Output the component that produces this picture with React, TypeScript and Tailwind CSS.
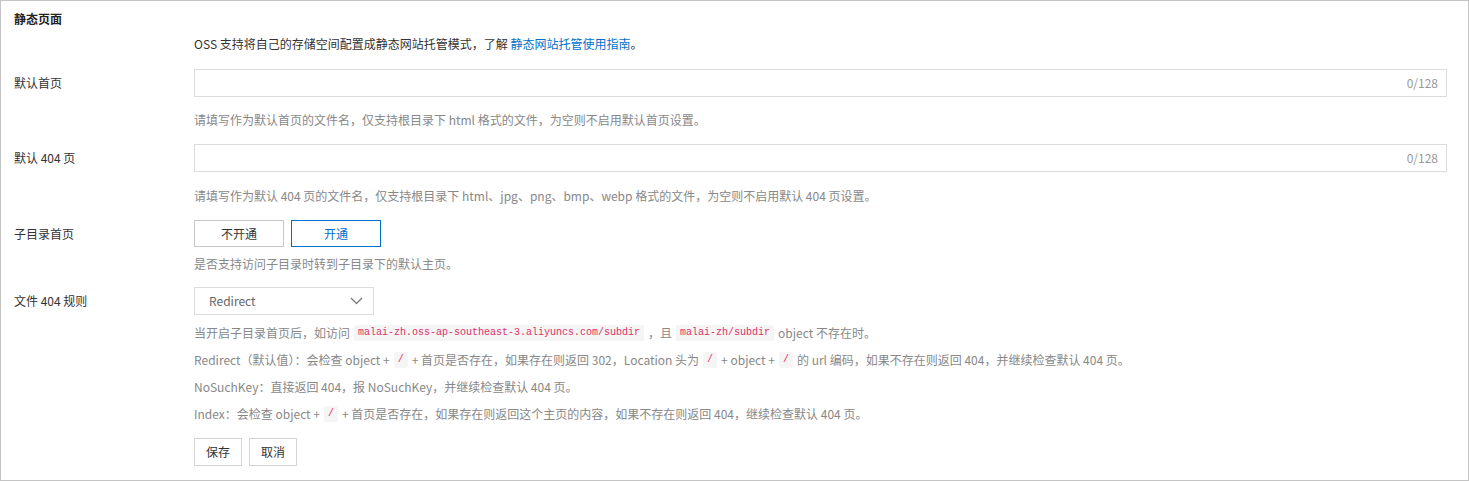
import React from "react";

const F = { fontFamily: '"Microsoft YaHei", "Noto Sans CJK SC", "Noto Sans", sans-serif' };

function Code({ children }: { children: React.ReactNode }) {
  return (
    <code className="mx-[4px] inline-block rounded-[2px] bg-[#f5f5f5] px-[4px] align-middle font-['Liberation_Mono'] text-[10px] leading-[16px] text-[#e0306a]">
      {children}
    </code>
  );
}

export default function App() {
  return (
    <div style={F} className="box-border h-[481px] w-[1469px] border border-[#c4c4c4] bg-white pl-[13px] pr-[21px] text-[12px] text-[#333]">
      <div className="mt-[9px] h-[18px] text-[12px] font-bold leading-[18px] text-[#222]">静态页面</div>
      <div className="ml-[180px] mt-[7px] h-[18px] leading-[18px] text-[#333]">
        OSS 支持将自己的存储空间配置成静态网站托管模式，了解 <span className="text-[#0070cc]">静态网站托管使用指南</span>。
      </div>

      <div className="mt-[16px] flex h-[28px] items-center">
        <div className="w-[180px] shrink-0">默认首页</div>
        <div className="flex h-[28px] flex-1 items-center justify-end border border-[#dcdcdc] px-[8px] text-[#999]">0/128</div>
      </div>
      <div className="ml-[180px] mt-[14px] h-[18px] leading-[18px] text-[#888]">
        请填写作为默认首页的文件名，仅支持根目录下 html 格式的文件，为空则不启用默认首页设置。
      </div>

      <div className="mt-[15px] flex h-[28px] items-center">
        <div className="w-[180px] shrink-0">默认 404 页</div>
        <div className="flex h-[28px] flex-1 items-center justify-end border border-[#dcdcdc] px-[8px] text-[#999]">0/128</div>
      </div>
      <div className="ml-[180px] mt-[15px] h-[18px] leading-[18px] text-[#888]">
        请填写作为默认 404 页的文件名，仅支持根目录下 html、jpg、png、bmp、webp 格式的文件，为空则不启用默认 404 页设置。
      </div>

      <div className="mt-[15px] flex h-[27px] items-center">
        <div className="w-[180px] shrink-0">子目录首页</div>
        <div className="flex gap-[7px]">
          <div className="flex h-[27px] w-[90px] items-center justify-center border border-[#c8c8c8] text-[#333]">不开通</div>
          <div className="flex h-[27px] w-[90px] items-center justify-center border border-[#0070cc] text-[#0070cc]">开通</div>
        </div>
      </div>
      <div className="ml-[180px] mt-[8px] h-[18px] leading-[18px] text-[#888]">是否支持访问子目录时转到子目录下的默认主页。</div>

      <div className="mt-[14px] flex h-[28px] items-center">
        <div className="w-[180px] shrink-0">文件 404 规则</div>
        <div className="flex h-[28px] w-[180px] items-center justify-between border border-[#dcdcdc] pl-[14px] pr-[10px] text-[#666]">
          <span>Redirect</span>
          <svg width="13" height="8" viewBox="0 0 13 8" fill="none">
            <path d="M1 1l5.5 5.5L12 1" stroke="#7a7a7a" strokeWidth="1.3" />
          </svg>
        </div>
      </div>

      <div className="ml-[180px] mt-[4px] text-[#888]">
        <div className="flex h-[27px] items-center whitespace-pre">
          <span>当开启子目录首页后，如访问</span><Code>malai-zh.oss-ap-southeast-3.aliyuncs.com/subdir</Code><span>，且</span><Code>malai-zh/subdir</Code><span>object 不存在时。</span>
        </div>
        <div className="flex h-[27px] items-center whitespace-pre">
          <span>Redirect（默认值）：会检查 object +</span><Code>/</Code><span>+ 首页是否存在，如果存在则返回 302，Location 头为</span><Code>/</Code><span>+ object +</span><Code>/</Code><span>的 url 编码，如果不存在则返回 404，并继续检查默认 404 页。</span>
        </div>
        <div className="flex h-[27px] items-center whitespace-pre">
          <span>NoSuchKey：直接返回 404，报 NoSuchKey，并继续检查默认 404 页。</span>
        </div>
        <div className="flex h-[27px] items-center whitespace-pre">
          <span>Index：会检查 object +</span><Code>/</Code><span>+ 首页是否存在，如果存在则返回这个主页的内容，如果不存在则返回 404，继续检查默认 404 页。</span>
        </div>
      </div>

      <div className="ml-[180px] mt-[11px] flex gap-[7px]">
        <div className="flex h-[28px] w-[48px] items-center justify-center border border-[#d4d4d4] text-[#333]">保存</div>
        <div className="flex h-[28px] w-[48px] items-center justify-center border border-[#d4d4d4] text-[#333]">取消</div>
      </div>
    </div>
  );
}
